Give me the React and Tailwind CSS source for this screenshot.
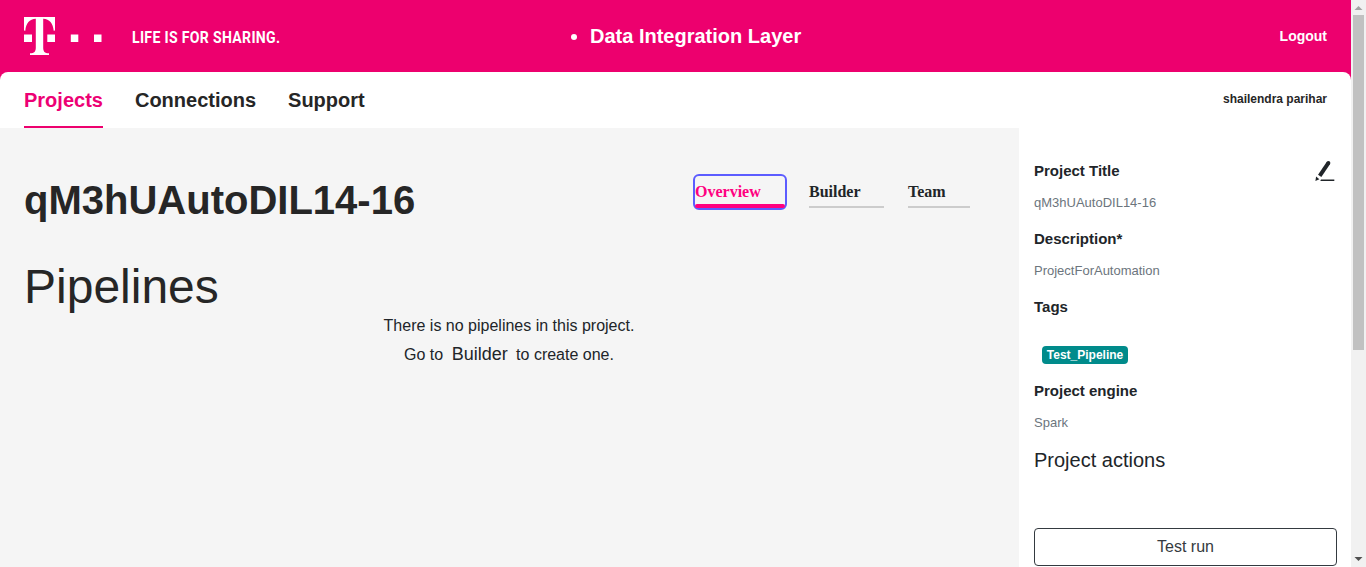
import React from "react";

function Logo() {
  return (
    <svg width="78" height="38" viewBox="0 0 78 38" fill="#fff" aria-label="T">
      <path d="M0 0H31V13.6L29.7 13.8C29 6.2 25.6 2 19.2 1.8V30.5C19.2 34.6 20.6 36.2 25 36.3V38H6V36.3C10.4 36.2 11.8 34.6 11.8 30.5V1.8C5.400 2 2 6.200 1.300 13.800L0 13.600Z" />
      <path d="M0 17.500H8V25H0ZM23.300 17.500H31V25H23.300ZM46.800 17.500H54.300V25H46.800ZM70 17.500H77.500V25H70Z" />
    </svg>
  );
}

function Header() {
  return (
    <header className="flex h-20 items-start bg-[#ed006e] text-white">
      <div className="flex w-[566px] shrink-0 items-start pl-6 pt-[17px]">
        <Logo />
        <span className="ml-[30px] mt-[9px] origin-left scale-x-[0.88] whitespace-nowrap font-['Roboto',sans-serif] text-base font-bold leading-6 tracking-[0.360px]">
          LIFE IS FOR SHARING.
        </span>
      </div>
      <div className="flex items-center pl-[5px] pt-6">
        <span className="mt-[2px] size-[6px] rounded-full bg-white" />
        <span className="ml-[13px] text-xl font-bold leading-6">Data Integration Layer</span>
      </div>
      <a className="ml-auto mr-6 mt-6 text-sm font-bold leading-6">Logout</a>
    </header>
  );
}

function Nav() {
  return (
    <nav className="relative -mt-2 flex h-14 gap-8 rounded-t-[8px] bg-white pl-6 pr-6 text-xl font-bold leading-[56px] text-[#262626]">
      <a className="h-14 border-b-2 border-[#ed006e] text-[#ed0074]">Projects</a>
      <a>Connections</a>
      <a>Support</a>
      <span className="ml-auto text-xs leading-[54px]">shailendra parihar</span>
    </nav>
  );
}

function Tabs() {
  return (
    <div className="flex items-start font-['Liberation_Serif',serif] text-base font-bold leading-6 text-[#212529]">
      <a className="h-9 w-[94px] rounded-[6px] border-2 border-[#5c5cff]">
        <span className="relative block h-8 pt-1 text-[#ff0080]">
          Overview
          <span className="absolute inset-x-0 bottom-0 h-1 rounded-[3px] bg-[#ff0080]" />
        </span>
      </a>
      <a className="ml-[22px] h-[34px] w-[75px] border-b-2 border-[#ccc] pt-[6px]">Builder</a>
      <a className="ml-6 h-[34px] w-[62px] border-b-2 border-[#ccc] pt-[6px]">Team</a>
    </div>
  );
}

function Field({ label, value }) {
  return (
    <div className="h-[68px]">
      <h6 className="text-[15px] font-bold leading-6">{label}</h6>
      <p className="mt-[10px] text-[13px] leading-5 text-[#6c757d]">{value}</p>
    </div>
  );
}

function PenIcon() {
  return (
    <svg className="mt-[2px]" width="20" height="21" viewBox="0 0 20 21" fill="#212529">
      <path d="M4.700 14.800L13.300 2.100" fill="none" stroke="#212529" strokeWidth="4" />
      <circle cx="13.400" cy="2" r="2" />
      <path d="M1.100 15.600L4.400 18.200L.4 20Z" />
      <path d="M6 18.600H19.300V20H5.300Z" />
    </svg>
  );
}

function Sidebar() {
  return (
    <aside className="w-[332px] shrink-0 bg-white pl-[15px] pr-[14px] pt-[31px] text-[#212529]">
      <div className="flex justify-between">
        <Field label="Project Title" value="qM3hUAutoDIL14-16" />
        <div className="mr-[2px]"><PenIcon /></div>
      </div>
      <Field label="Description*" value="ProjectForAutomation" />
      <h6 className="text-[15px] font-bold leading-6">Tags</h6>
      <div className="ml-2 mt-[27px] flex h-[33px] items-start">
        <span className="h-[18px] rounded-[4px] bg-[#008b8b] px-[4.800px] text-xs font-bold leading-[18px] text-white">Test_Pipeline</span>
      </div>
      <Field label="Project engine" value="Spark" />
      <h5 className="mt-px text-xl leading-6">Project actions</h5>
      <button className="mt-14 block h-[38px] w-full rounded-[4px] border border-[#343a40] text-base leading-9 text-[#343a40]">
        Test run
      </button>
    </aside>
  );
}

function Scrollbar() {
  return (
    <div className="flex w-[15px] shrink-0 flex-col items-center bg-[#f1f1f1]">
      <svg className="shrink-0" width="15" height="15"><path d="M3.500 10L7.500 6L11.500 10Z" fill="#a3a3a3" /></svg>
      <div className="ml-[-1px] h-[335px] w-[11px] bg-[#c1c1c1]" />
      <svg className="mt-auto shrink-0" width="15" height="15"><path d="M3.500 5L7.500 9L11.500 5Z" fill="#505050" /></svg>
    </div>
  );
}

export default function App() {
  return (
    <div className="flex h-[567px] w-[1366px] overflow-hidden font-['Liberation_Sans',Arial,sans-serif]">
      <div className="flex w-[1351px] flex-col overflow-hidden">
        <Header />
        <Nav />
        <div className="flex flex-1 overflow-hidden bg-[#f5f5f5]">
          <main className="flex-1 text-[#262626]">
            <div className="flex justify-between pl-6 pr-[49px] pt-[46px]">
              <h1 className="pt-[2px] text-[40px] font-bold leading-[48px]">qM3hUAutoDIL14-16</h1>
              <Tabs />
            </div>
            <h2 className="mt-[34px] pl-6 text-5xl leading-[58px]">Pipelines</h2>
            <div className="pr-px text-center text-base leading-6 text-[#212529]">
              <p className="-mt-[2px]">There is no pipelines in this project.</p>
              <p className="mt-[3px] flex items-center justify-center whitespace-pre leading-[27px]">
                Go to <span className="ml-1 mr-1 text-lg leading-[27px]">Builder</span> to create one.
              </p>
            </div>
          </main>
          <Sidebar />
        </div>
      </div>
      <Scrollbar />
    </div>
  );
}
